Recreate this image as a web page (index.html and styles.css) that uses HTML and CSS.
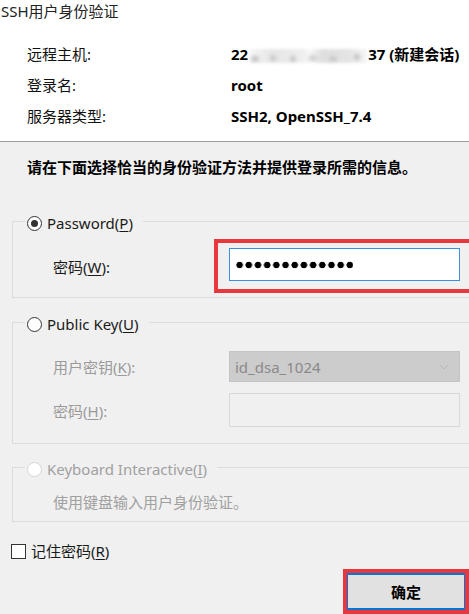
FILE: index.html
```html
<!DOCTYPE html>
<html lang="zh-CN">
<head>
<meta charset="utf-8">
<title>SSH用户身份验证</title>
<link rel="stylesheet" href="styles.css">
</head>
<body>
<div class="dialog">
  <header class="header">
    <div class="title">SSH用户身份验证</div>
    <dl class="info">
      <dt>远程主机:</dt>
      <dd><span>22</span><span class="masked" aria-hidden="true"></span><span>37 (新建会话)</span></dd>
      <dt>登录名:</dt>
      <dd>root</dd>
      <dt>服务器类型:</dt>
      <dd>SSH2, OpenSSH_7.4</dd>
    </dl>
  </header>

  <main class="content">
    <p class="intro">请在下面选择恰当的身份验证方法并提供登录所需的信息。</p>

    <fieldset class="group g1">
      <legend><span class="radio checked"></span><span>Password(<u>P</u>)</span></legend>
      <div class="row">
        <span class="label">密码(<u>W</u>):</span>
        <div class="highlight">
          <div class="input focused"><span class="dots" aria-label="password"></span></div>
        </div>
      </div>
    </fieldset>

    <fieldset class="group g2">
      <legend><span class="radio"></span><span>Public Key(<u>U</u>)</span></legend>
      <div class="row r1">
        <span class="label disabled">用户密钥(<u>K</u>):</span>
        <div class="combo">
          <span>id_dsa_1024</span>
          <svg class="chev" width="10" height="6" viewBox="0 0 10 6"><polyline points="0.5,0.5 5,5 9.5,0.5" fill="none" stroke="#b8b8b8" stroke-width="1"/></svg>
        </div>
      </div>
      <div class="row r2">
        <span class="label disabled">密码(<u>H</u>):</span>
        <div class="input disabled-input"></div>
      </div>
    </fieldset>

    <fieldset class="group g3">
      <legend class="disabled"><span class="radio off"></span><span>Keyboard Interactive(<u>I</u>)</span></legend>
      <p class="desc">使用键盘输入用户身份验证。</p>
    </fieldset>

    <label class="remember"><span class="checkbox"></span><span>记住密码(<u>R</u>)</span></label>

    <div class="actions">
      <div class="btn-highlight">
        <button class="btn" type="button">确定</button>
      </div>
    </div>
  </main>
</div>
</body>
</html>
```

FILE: styles.css
```css
* { box-sizing: border-box; }
html, body { margin: 0; padding: 0; }
body {
  width: 469px;
  height: 614px;
  overflow: hidden;
  background: #f0f0f0;
  font-family: "Noto Sans", "Noto Sans CJK SC", sans-serif;
  font-size: 15px;
  color: #1a1a1a;
}
u { text-decoration: underline; text-underline-offset: 2px; }

.header {
  background: #fff;
  height: 142px;
  border-bottom: 1px solid #a0a0a0;
}
.title {
  line-height: 22px;
  padding-left: 1px;
  color: #222;
}
.info {
  display: grid;
  grid-template-columns: 204px 1fr;
  grid-auto-rows: 31px;
  align-items: center;
  margin: 16px 0 0;
  padding-left: 27px;
  color: #111;
}
.info dt, .info dd { margin: 0; white-space: nowrap; }
.info dd { font-weight: bold; color: #000; }
.masked {
  display: inline-block;
  width: 118px;
  height: 14px;
  margin: 0 1px;
  vertical-align: middle;
  background:
    radial-gradient(ellipse 6px 5px at 6px 10px, #b8b8b8, transparent),
    radial-gradient(ellipse 5px 5px at 24px 9px, #c4c4c4, transparent),
    radial-gradient(ellipse 5px 5px at 44px 10px, #c0c0c0, transparent),
    radial-gradient(ellipse 7px 5px at 64px 9px, #c8c8c8, transparent),
    radial-gradient(ellipse 6px 5px at 84px 10px, #c4c4c4, transparent),
    radial-gradient(ellipse 5px 5px at 108px 8px, #bcbcbc, transparent),
    linear-gradient(90deg, #f6f6f6 0%, #e6e6e6 20%, #eeeeee 45%, #f8f8f8 52%, #dedede 62%, #e4e4e4 85%, #f6f6f6 100%);
  filter: blur(1.5px);
}

.intro {
  margin: 15px 0 0 27px;
  line-height: 20px;
  font-weight: bold;
  color: #000;
}

.group {
  margin: 32px 0 0 12px;
  padding: 0 0 4px;
  border: 1px solid #dcdcdc;
  border-right: none;
  min-width: 0;
}
.group legend {
  margin-left: 12px;
  padding: 4px 10px 0 2px;
  line-height: 20px;
  display: flex;
  align-items: center;
  gap: 5px;
  color: #1a1a1a;
}
.group legend.disabled { color: #a0a0a0; }

.radio {
  width: 15px;
  height: 15px;
  border: 1px solid #333;
  border-radius: 50%;
  background: #fff;
  display: inline-flex;
  align-items: center;
  justify-content: center;
}
.radio.checked::after {
  content: "";
  width: 7px;
  height: 7px;
  border-radius: 50%;
  background: #333;
}
.radio.off { border-color: #d4d4d4; }

.row {
  display: flex;
  align-items: center;
  padding-left: 40px;
}
.label { flex: none; width: 176px; }
.g1 .label { width: 161px; }
.label.disabled { color: #9a9a9a; }

.g1 .row { margin-top: 6px; }
.highlight {
  flex: 1;
  border: 4px solid #e8383d;
  border-right: none;
  padding: 5px 0 8px 11px;
}
.input {
  width: 231px;
  height: 33px;
  background: #fff;
  border: 1px solid #d9d9d9;
  display: flex;
  align-items: center;
  padding-left: 5px;
}
.input.focused { border-color: #3a8ee6; }
.dots {
  display: block;
  width: 118px;
  height: 8px;
  background: radial-gradient(circle, #000 3px, transparent 3.6px) 0 0 / 9.2px 8px repeat-x;
}

.g2 { margin-top: 12px; padding-bottom: 16px; }
.g2 .r1 { margin-top: 17px; }
.g2 .r2 { margin-top: 11px; }
.combo {
  width: 231px;
  height: 31px;
  background: #cccccc;
  border: 1px solid #c4c4c4;
  color: #8a8a8a;
  display: flex;
  align-items: center;
  justify-content: space-between;
  padding: 0 10px 0 5px;
}
.disabled-input {
  height: 34px;
  background: #f0f0f0;
  border-color: #d9d9d9;
}

.g3 { margin-top: 11px; padding-bottom: 9px; }
.desc {
  margin: 13px 0 0 40px;
  line-height: 20px;
  color: #a0a0a0;
}

.remember {
  display: flex;
  align-items: center;
  gap: 5px;
  margin: 19px 0 0 11px;
  line-height: 20px;
  color: #1a1a1a;
}
.checkbox {
  width: 15px;
  height: 15px;
  border: 1px solid #333;
  background: #fff;
}

.actions {
  margin-top: 8px;
  padding-left: 343px;
}
.btn-highlight {
  width: 126px;
  border: 4px solid #e8383d;
}
.btn {
  display: block;
  width: 100%;
  height: 37px;
  margin: 0;
  padding: 0;
  background: #e1e1e1;
  border: 1px solid #0078d7;
  border-width: 2px 1px;
  font: bold 15px "Noto Sans CJK SC", sans-serif;
  color: #000;
}
```
